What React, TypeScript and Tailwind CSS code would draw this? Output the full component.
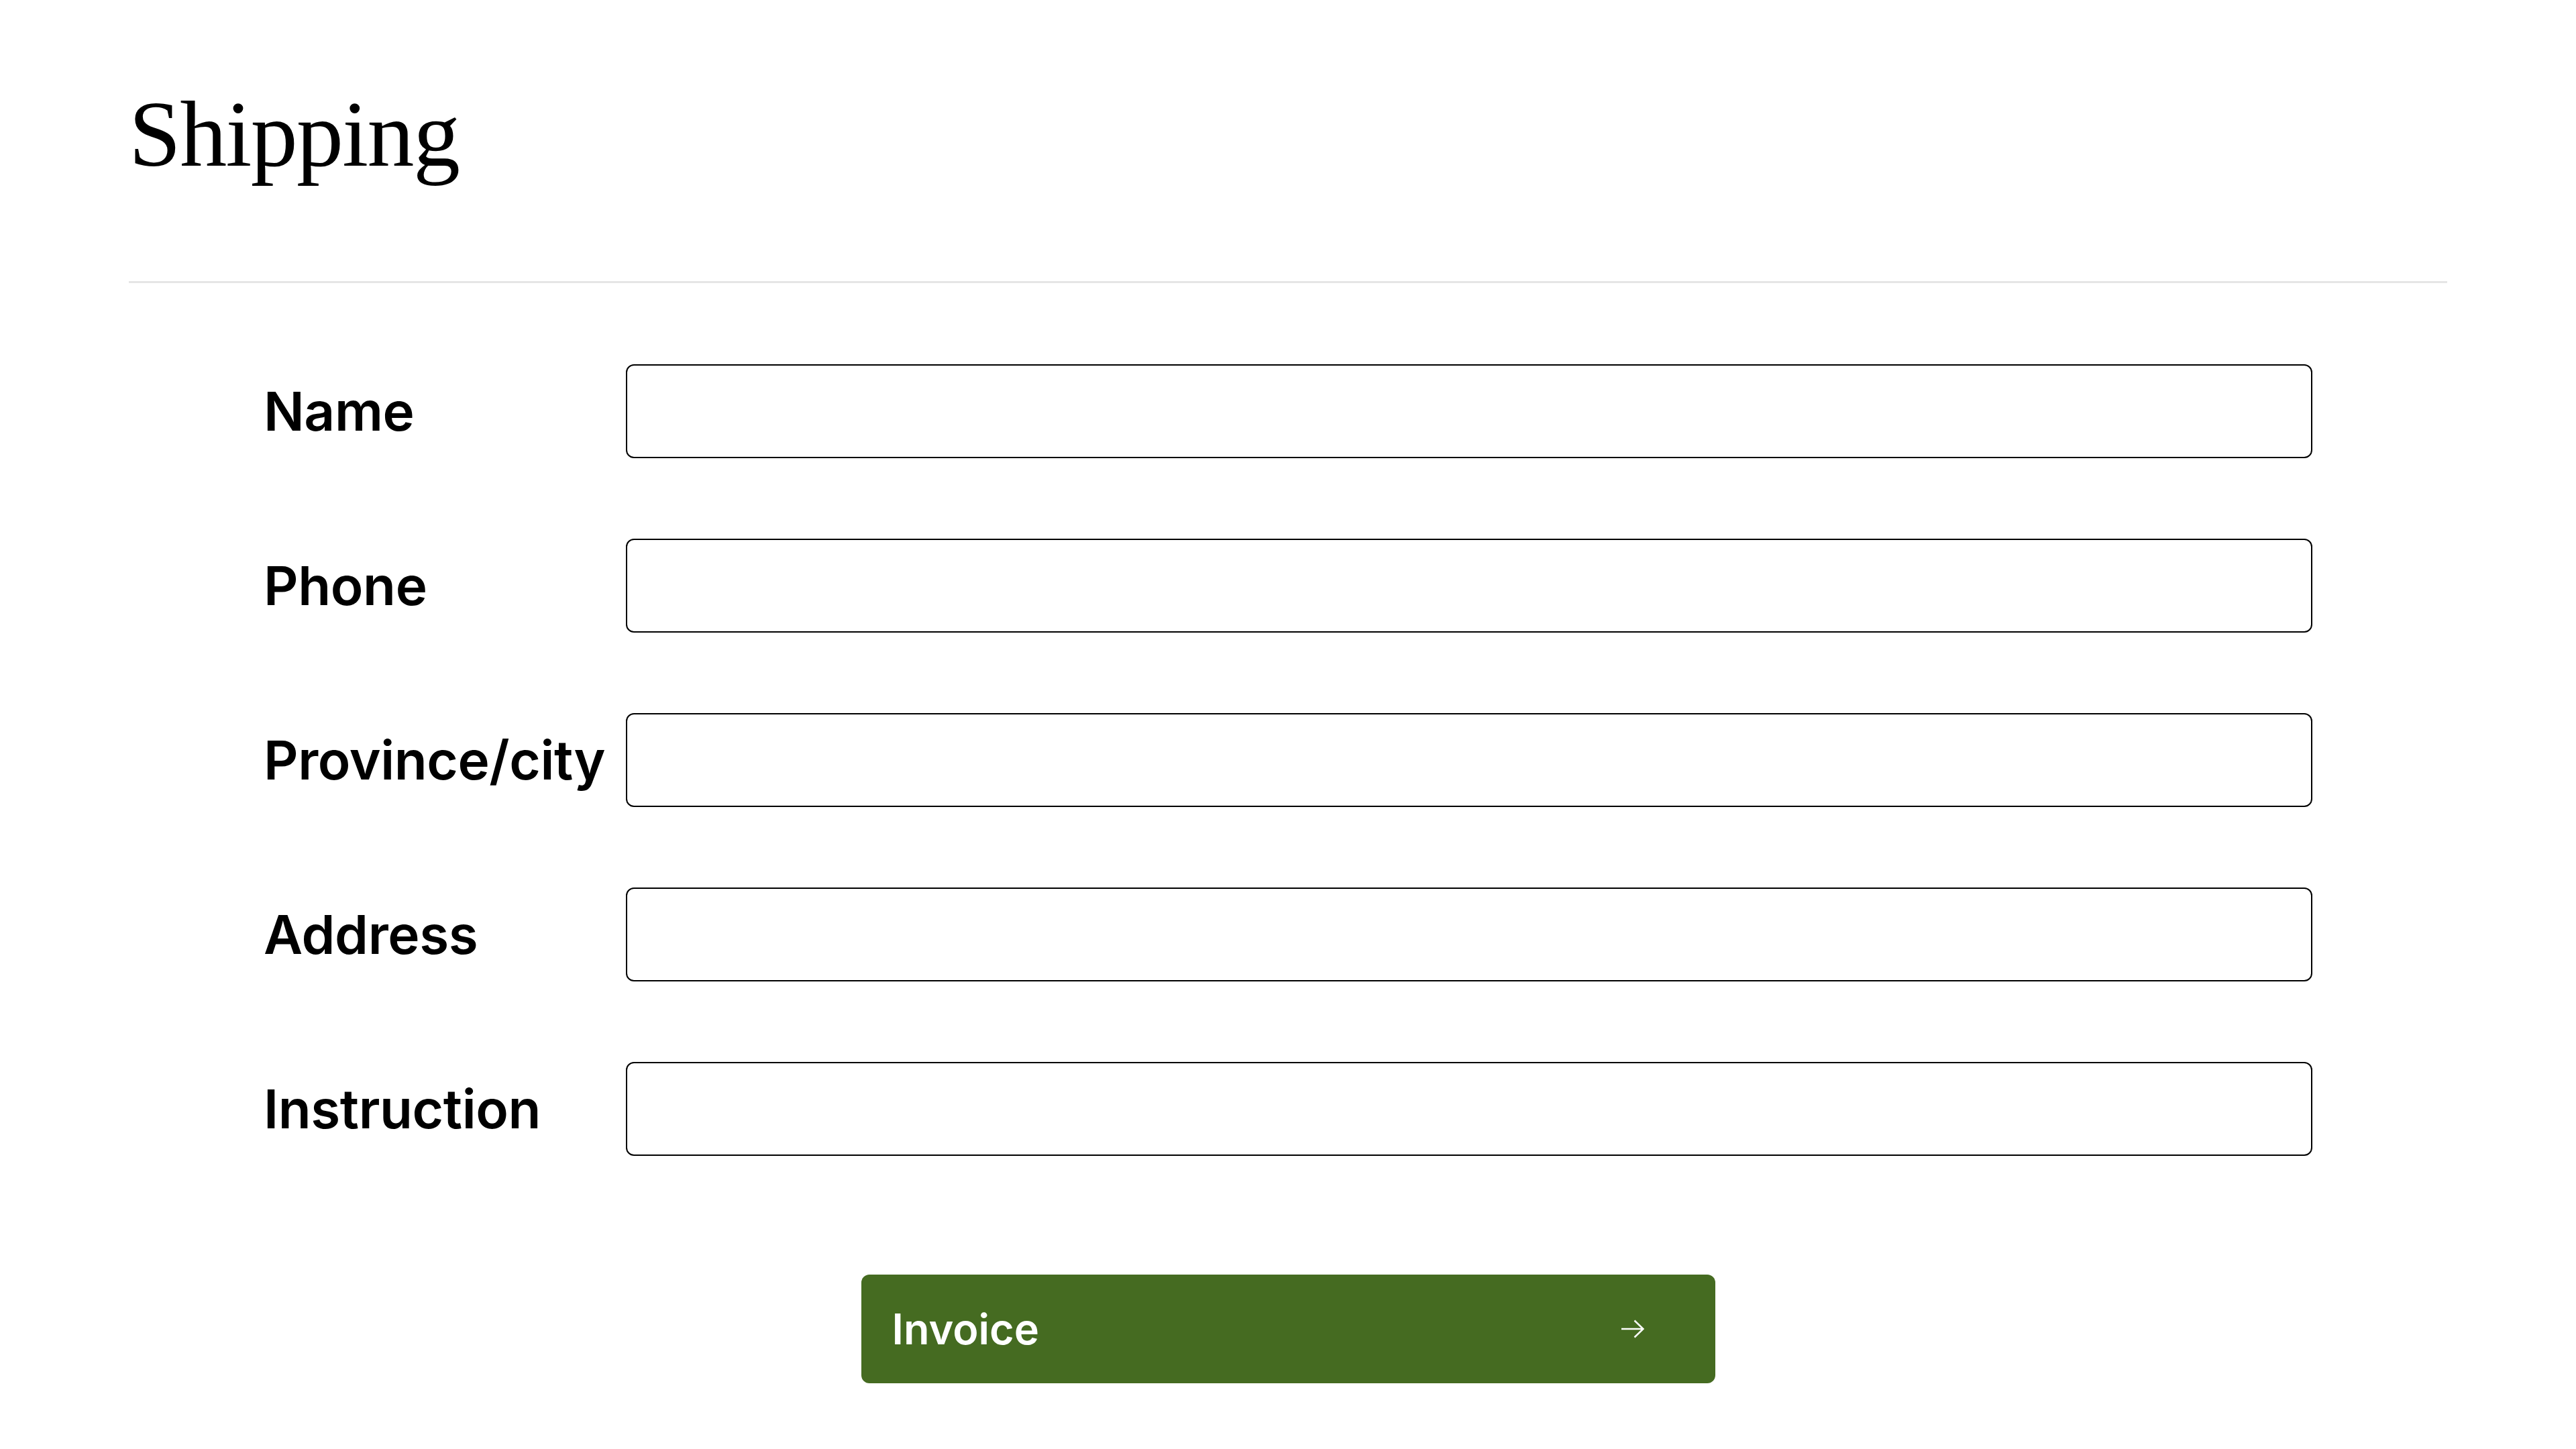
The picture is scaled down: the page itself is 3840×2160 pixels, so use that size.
const fields = ["Name", "Phone", "Province/city", "Address", "Instruction"];

function ArrowRight() {
  return (
    <svg width="34" height="28" viewBox="0 0 34 28" fill="none" aria-hidden="true">
      <path d="M0 14H32.5M19.5 1.5L32.5 14L19.5 26.5" stroke="white" strokeWidth="2.5" strokeLinejoin="miter" />
    </svg>
  );
}

export default function App() {
  return (
    <div className="min-h-screen bg-white px-[192px] pt-[130px] text-black">
      {/* Header */}
      <h1 className="font-['Liberation_Serif',serif] text-[140px] font-normal leading-none tracking-[-0.012em]">Shipping</h1>
      <div className="mt-[149px] h-[3px] bg-[#e5e5e5]" />

      {/* Form */}
      <form className="mx-auto mt-[121px] flex w-[3054px] flex-col gap-[120px] font-['Inter',sans-serif]">
        {fields.map((f) => (
          <div key={f} className="flex items-center">
            <label className="w-[540px] shrink-0 text-[80px] font-semibold leading-none tracking-[-0.005em]">{f}</label>
            <input
              type="text"
              className="h-[140px] flex-1 rounded-[12px] border-2 border-black bg-white px-6 text-[60px] outline-none"
            />
          </div>
        ))}
      </form>

      <button
        type="button"
        className="mx-auto mt-[177px] flex h-[162px] w-[1273px] items-center justify-between rounded-[12px] bg-[#456b21] pl-[46px] pr-[106px] font-['Inter',sans-serif] text-[63px] font-semibold leading-none text-white"
      >
        <span>Invoice</span>
        <ArrowRight />
      </button>
    </div>
  );
}
